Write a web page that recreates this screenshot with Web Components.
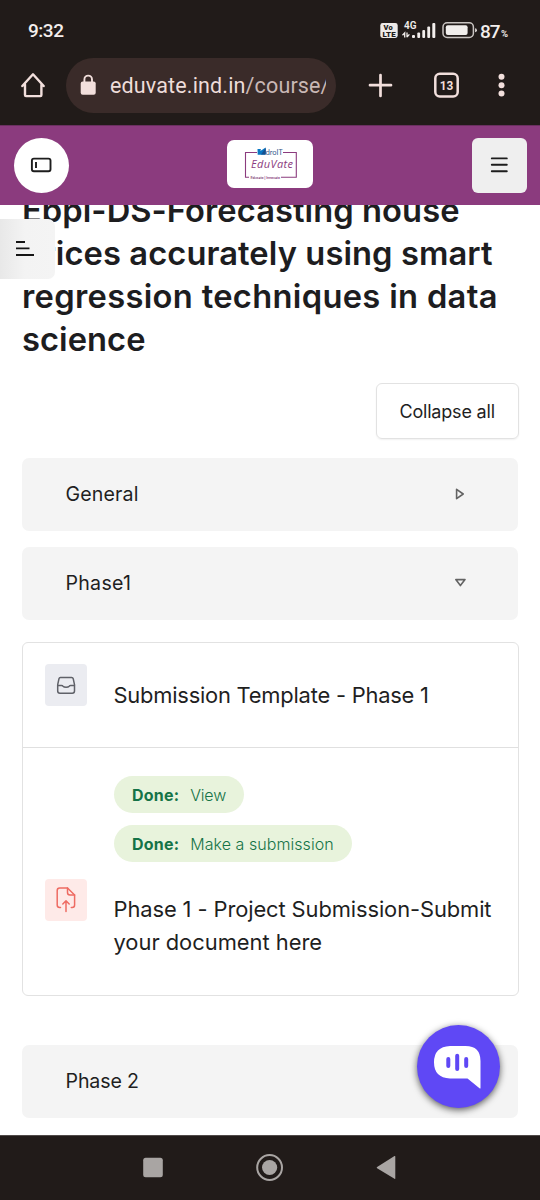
<!DOCTYPE html>
<html lang="en">
<head>
<meta charset="utf-8">
<meta name="viewport" content="width=device-width">
<title>EduVate course</title>
<style>
html,body{margin:0;padding:0}
body{width:540px;height:1200px;overflow:hidden;background:#fff;font-family:Inter,"Noto Sans",sans-serif;color:#1f1f1f}
</style>
</head>
<body>
<phone-screen></phone-screen>
<script>
function define(name, html, ready){
  const t=document.createElement('template');
  t.innerHTML=html;
  customElements.define(name, class extends HTMLElement{
    constructor(){super();this.attachShadow({mode:'open'}).append(t.content.cloneNode(true));}
    connectedCallback(){if(ready)ready(this,this.shadowRoot);}
  });
}

/* One line of text, tracked so that it fills the width in its "w" attribute */
define('text-run', `<style>:host{display:block;white-space:pre}span{display:inline-block}</style><span><slot></slot></span>`,
 (el,root)=>{
  const s=root.querySelector('span'), w=+el.getAttribute('w');
  if(!w)return;
  const n=el.textContent.length;
  s.style.letterSpacing=((w-s.getBoundingClientRect().width)/(n-1))+'px';
 });

define('status-bar', `<style>
:host{display:flex;height:58px;box-sizing:border-box;padding:19px 31px 0 28px;font-family:Roboto,sans-serif;color:#f3eeec;justify-content:space-between}
.t{font-size:19px;font-weight:500;line-height:24px}
.r{display:flex;height:24px}
.p{font-size:19px;font-weight:500;line-height:25px;margin-left:3.5px;width:20.5px}
.s{font-size:9.5px;font-weight:700;line-height:24px;padding-top:3px;width:8px;margin-left:.5px}
svg{display:block}
text{font-family:Roboto,sans-serif}
</style>
<text-run class="t" w="36">9:32</text-run>
<div class="r">
<svg width="97" height="24" viewBox="380 19 97 24">
<rect x="380.3" y="23" width="17.4" height="15" rx="2.4" fill="#eeeae8"/>
<text x="383.6" y="30.3" font-size="7" font-weight="900" fill="#211b19" textLength="9" lengthAdjust="spacingAndGlyphs">Vo</text>
<text x="382.6" y="36.8" font-size="7" font-weight="900" fill="#211b19" textLength="13" lengthAdjust="spacingAndGlyphs">LTE</text>
<text x="404" y="29.3" font-size="10" font-weight="600" fill="#f3eeec" textLength="12.5" lengthAdjust="spacingAndGlyphs">4G</text>
<path d="M402.5 35.3l2.2-2.4v4.6M407 37.3v-4.8M407 37l2.4-2.6" stroke="#f3eeec" stroke-width="1.3" fill="none"/>
<g fill="#f3eeec"><rect x="412" y="35" width="3" height="3" rx="1"/><rect x="417.3" y="32.5" width="2.8" height="5.5" rx="1"/><rect x="422.3" y="30" width="2.8" height="8" rx="1"/><rect x="427.3" y="26.5" width="2.8" height="11.5" rx="1"/><rect x="432.3" y="23" width="3" height="15" rx="1"/></g>
<rect x="443" y="22.8" width="30.4" height="14.6" rx="4.2" fill="none" stroke="#c9c4c1" stroke-width="1.5"/>
<rect x="445.8" y="25.3" width="21.8" height="9.6" rx="2" fill="#f1eeec"/>
<path d="M475.2 28.3q1.6.2 1.6 2t-1.6 2z" fill="#f3eeec"/>
</svg>
<text-run class="p" w="20.5">87</text-run><span class="s">%</span>
</div>`);

define('browser-bar', `<style>
:host{display:flex;height:67px;align-items:flex-start}
svg{display:block;flex:none}
.pill{display:flex;width:270px;height:55px;border-radius:28px;background:#3a2b29;overflow:hidden;box-sizing:border-box;padding-left:14px}
.url{width:216px;overflow:hidden;font:21.5px/56px Roboto,sans-serif;color:#eeddda;margin-left:6px}
i{font-style:normal;color:#c9b8b5}
text{font-family:Roboto,sans-serif}
</style>
<svg width="66" height="60" viewBox="0 58 66 60"><path d="M22.3 86L33 74.3 43.7 86M25 84.5v10.6q0 1 1 1h14.4q1 0 1-1V84.5" fill="none" stroke="#f2dfdc" stroke-width="2.4" stroke-linejoin="round" stroke-linecap="round"/></svg>
<div class="pill"><svg width="24" height="55" viewBox="80 58 24 55"><rect x="80.7" y="81.5" width="15" height="13.3" rx="2" fill="#f2dfdc"/><path d="M84.4 82v-2.6a3.8 3.8 0 0 1 7.6 0V82" fill="none" stroke="#f2dfdc" stroke-width="1.9"/></svg>
<text-run class="url" w="219.5">eduvate.ind.in<i>/course/</i></text-run></div>
<svg width="204" height="60" viewBox="336 58 204 60"><path d="M380.5 75v21M370 85.2h21" stroke="#f2dfdc" stroke-width="2.7" stroke-linecap="round"/>
<rect x="435.3" y="73.8" width="22.4" height="22.6" rx="4.5" fill="none" stroke="#f2dfdc" stroke-width="2.5"/>
<text x="446.6" y="89.7" text-anchor="middle" font-size="13.5" font-weight="700" fill="#f2dfdc" textLength="13.6" lengthAdjust="spacingAndGlyphs">13</text>
<g fill="#f2dfdc"><circle cx="501.5" cy="76.8" r="3"/><circle cx="501.5" cy="85.2" r="3"/><circle cx="501.5" cy="93.4" r="3"/></g></svg>`);

define('site-header', `<style>
:host{display:flex;height:80px;box-sizing:border-box;background:#8b3b7e;justify-content:space-between;align-items:flex-start;padding:12.5px 13px 0 14px;position:relative;z-index:2;box-shadow:inset 0 1px #6a3060}
svg{display:block}
.m{width:55px;height:55px;background:#fff;border-radius:50%}
.logo{width:86px;height:48px;background:#fff;border-radius:7px;margin:2.5px 1px 0 0}
.b{width:55px;height:55px;background:#efefef;border-radius:6px}
</style>
<div class="m"><svg width="55" height="55" viewBox="14 138 55 55"><rect x="31.9" y="158.6" width="18.6" height="12.6" rx="2" fill="none" stroke="#1d1d1d" stroke-width="1.9"/><path d="M36 162v6" stroke="#1d1d1d" stroke-width="1.9"/></svg></div>
<div class="logo"><svg width="86" height="48" viewBox="227 140 86 48">
<path d="M257 152.5H245.5V177.3H249M283 152.5H296.3V177.3H281" fill="none" stroke="#8b3b7e" stroke-width="1.1"/>
<path d="M257.5 149h3.4l-.5 2 5.2-3.4-.2 7.2h-7.7z" fill="#0877c4"/><path d="M261 154.5l4.8-6.8v6.8z" fill="#154f8e"/>
<text x="265.5" y="155" font-family="Inter,sans-serif" font-size="7.2" fill="#335a8b" textLength="17.5">droIT</text>
<text x="251" y="167.8" font-family="Open Sans,sans-serif" font-style="italic" font-size="11" fill="#8b3b7e" textLength="42">EduVate</text>
<text x="250.5" y="178.5" font-family="Inter,sans-serif" font-size="3.5" font-weight="600" fill="#8b4b80" textLength="29.5">Educate | Innovate</text>
</svg></div>
<div class="b"><svg width="55" height="55" viewBox="472 138 55 55"><path d="M491.8 158.4h15M491.8 164.8h15M491.8 171.2h15" stroke="#1d1d1d" stroke-width="1.9" stroke-linecap="round"/></svg></div>`);

define('drawer-tab', `<style>:host{display:block;position:absolute;left:0;top:219px;width:55px;height:60px;background:linear-gradient(90deg,#e8e8e8,#f3f3f3 45%,#f4f4f4);border-radius:0 7px 7px 0;z-index:1}svg{display:block}</style>
<svg width="55" height="60" viewBox="0 219 55 60"><path d="M16 242h9M16 248.4h13.5M16 255h18" stroke="#151515" stroke-width="1.9"/></svg>`);

define('course-title', `<style>:host{display:block;margin:-16px 0 0 22px;font-weight:560;font-size:32.7px;line-height:43px;color:#1d1d1f}</style>
<text-run w="437.5">Ebpl-DS-Forecasting house</text-run>
<text-run w="470.5">prices accurately using smart</text-run>
<text-run w="475.5">regression techniques in data</text-run>
<text-run w="123.5">science</text-run>`);

define('outline-button', `<style>:host{display:block;width:143px;height:56px;box-sizing:border-box;border:1px solid #e2e2e2;border-radius:6px;margin:22px 21px 0 auto;padding-left:22.5px;font-size:18px;line-height:55px;box-shadow:0 1px 2px #0000000f}</style><slot></slot>`);

define('section-row', `<style>:host{display:flex;height:73px;margin:0 22px;background:#f4f4f4;border-radius:7px;justify-content:space-between;align-items:center;padding:0 50px 0 43.5px;font-size:19.6px;line-height:73px}
svg{display:block}</style><slot></slot><svg width="16" height="16" viewBox="0 0 16 16"><path fill="none" stroke="#636363" stroke-width="1.6" stroke-linejoin="round"/></svg>`,
 (el,root)=>{
  root.querySelector('path').setAttribute('d', el.hasAttribute('open')?'M3.8 4.6h9.2l-4.6 6z':'M4.6 3.3v9.4l6.6-4.7z');
  if(el.hasAttribute('bare'))root.querySelector('svg').remove();
 });

define('activity-list', `<style>:host{display:block;margin:22px 21px 0 22px;height:354px;box-sizing:border-box;border:1px solid #e2e2e2;border-radius:6px}</style><slot></slot>`);

define('activity-item', `<style>:host{display:flex;padding-left:22px;font-size:21.9px;line-height:33px}
.icon{padding-top:var(--icon-top);width:68.5px;flex:none}</style><div class="icon"><slot name="icon"></slot></div><div><slot></slot></div>`);

define('activity-icon', `<style>:host{display:block}svg{display:block;border-radius:4px;background:var(--tile)}</style><svg width="42" height="42" viewBox="0 0 42 42"></svg>`,
 (el,root)=>{
  root.querySelector('svg').innerHTML = el.getAttribute('kind')==='inbox'
  ? '<g fill="none" stroke="#5f6168" stroke-width="1.5" stroke-linejoin="round" stroke-linecap="round"><path d="M15.4 13.4h11.2q1.3 0 1.6 1.2l1.3 6v6.5q0 2.2-2.2 2.2H14.9q-2.2 0-2.2-2.2v-6.5l1.3-6q.3-1.2 1.4-1.2z"/><path d="M12.8 21.4h3.7q1 0 1.5.8.9 1 3.1 1t3.1-1q.5-.8 1.5-.8h3.7"/></g>'
  : '<g fill="none" stroke="#ee6b62" stroke-width="1.5" stroke-linejoin="round" stroke-linecap="round"><path d="M15.5 28.5h-.8q-2.5 0-2.5-2.5V11.5Q12.2 9 14.7 9h7.8l7.1 7v10q0 2.5-2.5 2.5h-.8"/><path d="M22.5 9v4.5q0 2.5 2.5 2.5h4.6"/><path d="M21 32.5v-10.3M17.8 25l3.2-3.2 3.2 3.2"/></g>';
 });

define('done-pill', `<style>:host{display:flex;width:max-content;height:37.5px;border-radius:19px;background:#e8f3dc;color:#157347;font-size:16px;font-weight:350;line-height:38px;padding:0 18px 0 18.5px;gap:11px}
b{font-weight:700}</style><b><text-run w="47">Done:</text-run></b><slot></slot>`);

define('chat-bubble', `<style>:host{display:block;position:absolute;left:417px;top:1025px;width:83px;height:83px;border-radius:50%;background:#5f48f5;box-shadow:0 2px 7px #000000a0}svg{display:block}</style>
<svg width="83" height="83" viewBox="417 1025 83 83"><path d="M450 1046h15.5q15 0 15 15v27q0 1-1 .3l-12-9.8H450q-16-.7-16-16.2T450 1046z" fill="#fff"/><path d="M448.3 1059v7M457.2 1055.7v13.4M466.2 1059v7" stroke="#5f48f5" stroke-width="4" stroke-linecap="round"/></svg>`);

define('nav-bar', `<style>:host{display:block;height:65px;background:#211b19;box-shadow:inset 0 1px #504a49}svg{display:block}</style>
<svg width="540" height="65" viewBox="0 1135 540 65"><g fill="#a9a5a3"><rect x="143.2" y="1157.7" width="19.6" height="19.6" rx="2.5"/><circle cx="269.6" cy="1167.5" r="7.6"/><path d="M395.3 1156.5v22q0 .8-.8.3l-17.4-10.5q-.9-.6 0-1.2l17.4-11q.8-.4.8.4z"/></g><circle cx="269.6" cy="1167.5" r="12.4" fill="none" stroke="#a9a5a3" stroke-width="2"/></svg>`);

define('course-page', `<style>
:host{display:block;height:930px;overflow:hidden}
.head{margin-bottom:18.5px}
.gap{margin-top:16px}
.one{height:104px;border-bottom:1px solid #e0e0e0;--icon-top:21.5px;--tile:#ebecf1}
.two{--icon-top:131px;--tile:#feeae8}
.label{margin-top:36px}
.p1{margin-top:28px}.p2{margin-top:11.5px}.t2{margin-top:31px}
.last{margin-top:49px}
</style>
<course-title></course-title>
<outline-button class="head"><text-run w="95.5">Collapse all</text-run></outline-button>
<section-row><text-run w="73">General</text-run></section-row>
<section-row class="gap" open><text-run w="65.5">Phase1</text-run></section-row>
<activity-list>
<activity-item class="one"><activity-icon slot="icon" kind="inbox"></activity-icon><text-run class="label" w="315.5">Submission Template - Phase 1</text-run></activity-item>
<activity-item class="two"><activity-icon slot="icon" kind="upload"></activity-icon>
<done-pill class="p1"><text-run w="36">View</text-run></done-pill>
<done-pill class="p2"><text-run w="143.5">Make a submission</text-run></done-pill>
<text-run class="t2" w="378">Phase 1 - Project Submission-Submit</text-run>
<text-run w="208.5">your document here</text-run>
</activity-item>
</activity-list>
<section-row class="last" bare><text-run w="73.5">Phase 2</text-run></section-row>`);

define('phone-screen', `<style>:host{display:block;position:relative;width:540px;height:1200px;overflow:hidden}.top{background:#211b19}</style>
<div class="top"><status-bar></status-bar><browser-bar></browser-bar></div>
<site-header></site-header>
<course-page></course-page>
<nav-bar></nav-bar>
<drawer-tab></drawer-tab>
<chat-bubble></chat-bubble>`);
</script>
</body>
</html>
